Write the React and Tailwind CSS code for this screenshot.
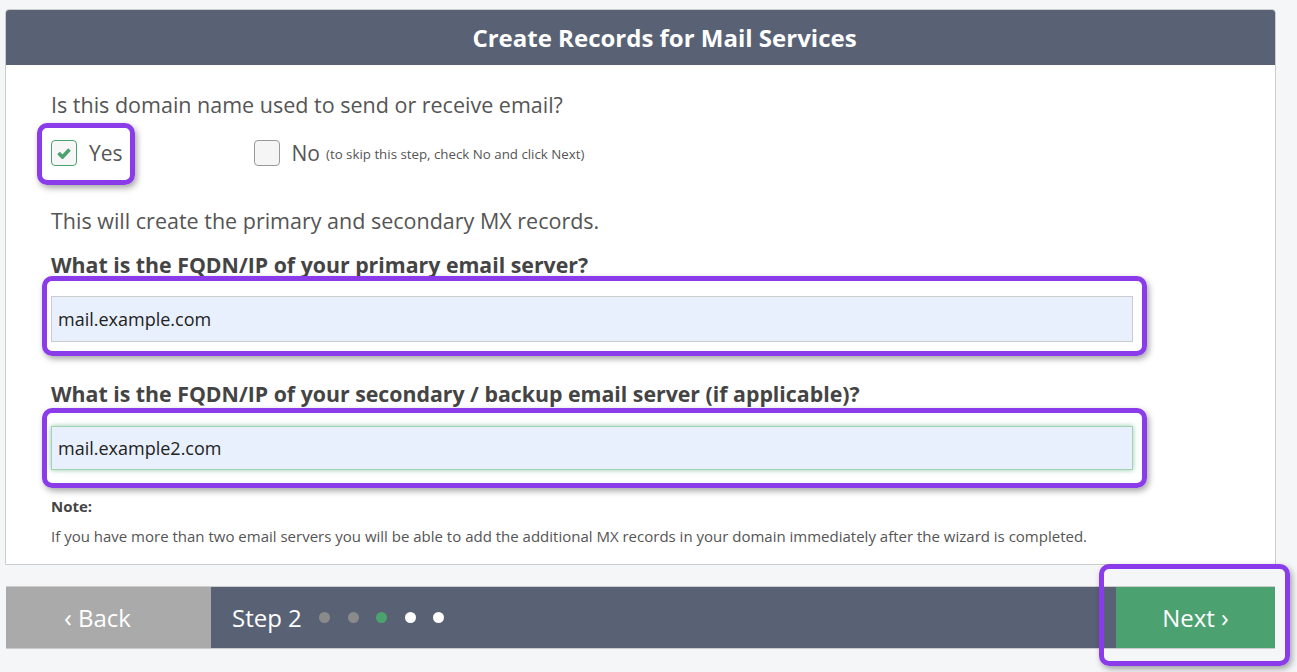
import React from "react";

const Highlight = ({ className }) => (
    <div
        className={`pointer-events-none absolute rounded-[10px] border-[5px] border-[#8a3bea] shadow-[2px_3px_6px_rgba(0,0,0,0.35)] ${className}`}
    />
);

const Dot = ({ color }) => <span className={`inline-block h-[11px] w-[11px] rounded-full ${color}`} />;

const App = () => {
    return (
        <div className="min-h-[672px] w-[1297px] bg-[#f5f6f8] pt-[9px] font-['Open_Sans',sans-serif] text-[#555]">
            {/* card */}
            <div className="ml-[5px] w-[1271px] overflow-hidden rounded-t-[4px] border border-[#ccc] bg-white">
                <div className="flex h-[55px] items-center justify-center bg-[#596274] pl-[48px] text-[24px] font-bold text-white">
                    Create Records for Mail Services
                </div>
                <div className="relative px-[45px] pb-[18px] pt-[27px]">
                    <p className="text-[21.5px] leading-[26px]">Is this domain name used to send or receive email?</p>

                    <div className="relative mt-[22px] flex h-[26px] items-center">
                        <div className="flex items-center">
                            <span className="flex h-[26px] w-[26px] items-center justify-center rounded-[4px] border border-[#4ba26f] bg-[#f7f7f7]">
                                <svg width="14" height="12" viewBox="0 0 14 12">
                                    <path d="M1.5 6 L5.5 10 L12.5 2.5" fill="none" stroke="#4ba26f" strokeWidth="3.6" />
                                </svg>
                            </span>
                            <span className="ml-[12px] text-[21px] leading-[26px]">Yes</span>
                        </div>
                        <div className="ml-[131px] flex items-center">
                            <span className="h-[26px] w-[26px] rounded-[4px] border border-[#999] bg-[#f5f5f5]" />
                            <span className="ml-[12px] text-[21px] leading-[26px]">No</span>
                            <span className="ml-[6px] mt-[3px] text-[13.3px]">(to skip this step, check No and click Next)</span>
                        </div>
                        <Highlight className="left-[-14px] top-[-17px] h-[62px] w-[98px]" />
                    </div>

                    <p className="mt-[42px] text-[21.5px] leading-[26px]">This will create the primary and secondary MX records.</p>
                    <p className="mt-[18px] text-[21.3px] font-bold leading-[26px] text-[#444]">
                        What is the FQDN/IP of your primary email server?
                    </p>
                    <div className="relative mt-[18px] w-[1082px]">
                        <div className="flex h-[46px] items-center border border-[#ccc] bg-[#e8f0fe] px-[6px] text-[18px] text-[#222]">
                            mail.example.com
                        </div>
                        <Highlight className="left-[-9px] top-[-20px] h-[80px] w-[1105px]" />
                    </div>

                    <p className="mt-[39px] text-[21.3px] font-bold leading-[26px] text-[#444]">
                        What is the FQDN/IP of your secondary / backup email server (if applicable)?
                    </p>
                    <div className="relative mt-[19px] w-[1082px]">
                        <div className="flex h-[44px] items-center border border-[#9fd4b5] bg-[#e8f0fe] px-[6px] text-[18px] text-[#222] shadow-[0_0_5px_rgba(76,161,112,0.6)]">
                            mail.example2.com
                        </div>
                        <Highlight className="left-[-9px] top-[-18px] h-[80px] w-[1105px]" />
                    </div>

                    <p className="mt-[26px] text-[15px] font-bold leading-[20px] text-[#444]">Note:</p>
                    <p className="mt-[10px] text-[15px] leading-[20px]">
                        If you have more than two email servers you will be able to add the additional MX records in your domain
                        immediately after the wizard is completed.
                    </p>
                </div>
            </div>

            {/* wizard bar */}
            <div className="relative ml-[6px] mt-[21px] flex h-[63px] w-[1269px] border-y border-[#ccc] text-[24px] text-white">
                <div className="flex w-[205px] items-center justify-center bg-[#aaa] pr-[22px]">
                    <span className="mr-[6px] text-[26px]">‹</span>Back
                </div>
                <div className="flex flex-1 items-center gap-[17.5px] bg-[#596274] pl-[21px]">
                    <span>Step 2</span>
                    <Dot color="bg-[#8a8a8a]" />
                    <Dot color="bg-[#8a8a8a]" />
                    <Dot color="bg-[#4ba26f]" />
                    <Dot color="bg-white" />
                    <Dot color="bg-white" />
                </div>
                <div className="flex w-[159px] items-center justify-center bg-[#4ca170]">
                    Next<span className="ml-[6px] text-[26px]">›</span>
                </div>
                <Highlight className="right-[-15px] top-[-23px] h-[102px] w-[191px]" />
            </div>
        </div>
    );
};

export default App;
